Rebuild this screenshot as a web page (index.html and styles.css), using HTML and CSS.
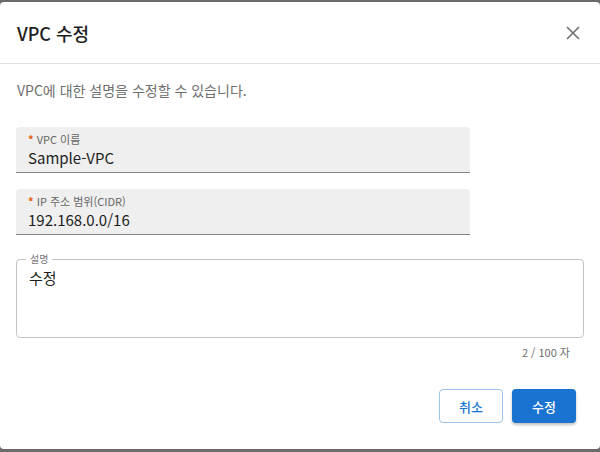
FILE: index.html
```html
<!DOCTYPE html>
<html lang="ko">
<head>
<meta charset="utf-8">
<link rel="stylesheet" href="styles.css">
</head>
<body>
<div class="dialog">
  <div class="header">
    <h2 class="title">VPC 수정</h2>
    <button class="close" aria-label="닫기">
      <svg width="14" height="14" viewBox="0 0 14 14"><path d="M1 1L13 13M13 1L1 13" stroke="#6f6f6f" stroke-width="1.6" fill="none"/></svg>
    </button>
  </div>
  <div class="content">
    <p class="desc">VPC에 대한 설명을 수정할 수 있습니다.</p>
    <div class="filled">
      <div class="label"><span class="req">*</span> VPC 이름</div>
      <div class="value">Sample-VPC</div>
    </div>
    <div class="filled">
      <div class="label"><span class="req">*</span> IP 주소 범위(CIDR)</div>
      <div class="value">192.168.0.0/16</div>
    </div>
    <fieldset class="outlined">
      <legend>설명</legend>
      <div class="value">수정</div>
    </fieldset>
    <div class="counter">2 / 100 자</div>
  </div>
  <div class="actions">
    <button class="btn cancel">취소</button>
    <button class="btn primary">수정</button>
  </div>
</div>
</body>
</html>
```
FILE: styles.css
```css
html, body { margin: 0; padding: 0; }
body {
  background: #6b6b6b;
  font-family: "Noto Sans CJK KR", "Noto Sans", sans-serif;
  width: 600px;
  height: 452px;
  overflow: hidden;
  padding-top: 2px;
  box-sizing: border-box;
}
.dialog {
  background: #fff;
  width: 600px;
  height: 447px;
  border-radius: 4px;
  display: flex;
  flex-direction: column;
}
.header {
  height: 61px;
  border-bottom: 1px solid #e2e2e2;
  display: flex;
  align-items: center;
  justify-content: space-between;
  padding: 0 17px;
}
.title {
  margin: 0;
  font-size: 18px;
  line-height: 24px;
  font-weight: 500;
  color: #1e1e1e;
}
.close {
  background: none;
  border: 0;
  padding: 0;
  width: 20px;
  height: 20px;
  display: flex;
  align-items: center;
  justify-content: center;
}
.content {
  padding: 16px 16px 0 16px;
  display: flex;
  flex-direction: column;
}
.desc {
  margin: 0 0 0 1px;
  font-size: 14px;
  line-height: 20px;
  color: #6e6e6e;
}
.filled {
  margin-top: 27px;
  width: 454px;
  height: 46px;
  box-sizing: border-box;
  background: #efefef;
  border-radius: 4px 4px 0 0;
  border-bottom: 1px solid #858585;
  padding: 5px 12px 0 12px;
}
.filled + .filled { margin-top: 16px; }
.label {
  font-size: 11px;
  line-height: 15px;
  color: #666;
}
.req { color: #e8590c; font-weight: 700; }
.value {
  font-size: 15px;
  line-height: 20px;
  color: #1e1e1e;
  margin-top: 1px;
}
.outlined {
  margin: 18px 0 0 0;
  height: 85px;
  box-sizing: border-box;
  border: 1px solid #c4c4c4;
  border-radius: 4px;
  padding: 0 12px;
}
.outlined legend {
  font-size: 10px;
  color: #777;
  padding: 0 4px;
  margin-left: -3px;
  line-height: 12px;
}
.outlined .value { margin-top: 3px; }
.counter {
  align-self: flex-end;
  font-size: 11px;
  line-height: 14px;
  color: #6e6e6e;
  margin-top: 7px;
  margin-right: 14px;
}
.actions {
  display: flex;
  justify-content: flex-end;
  gap: 9px;
  padding: 30px 24px 0 0;
}
.btn {
  width: 64px;
  height: 34px;
  border-radius: 4px;
  font-family: inherit;
  font-size: 13px;
  font-weight: 500;
}
.cancel {
  background: #fff;
  border: 1px solid #9cc3ec;
  color: #1976d2;
}
.primary {
  background: #1a73d0;
  border: 0;
  color: #fff;
  box-shadow: 0 2px 3px rgba(0,0,0,0.25);
}
```
